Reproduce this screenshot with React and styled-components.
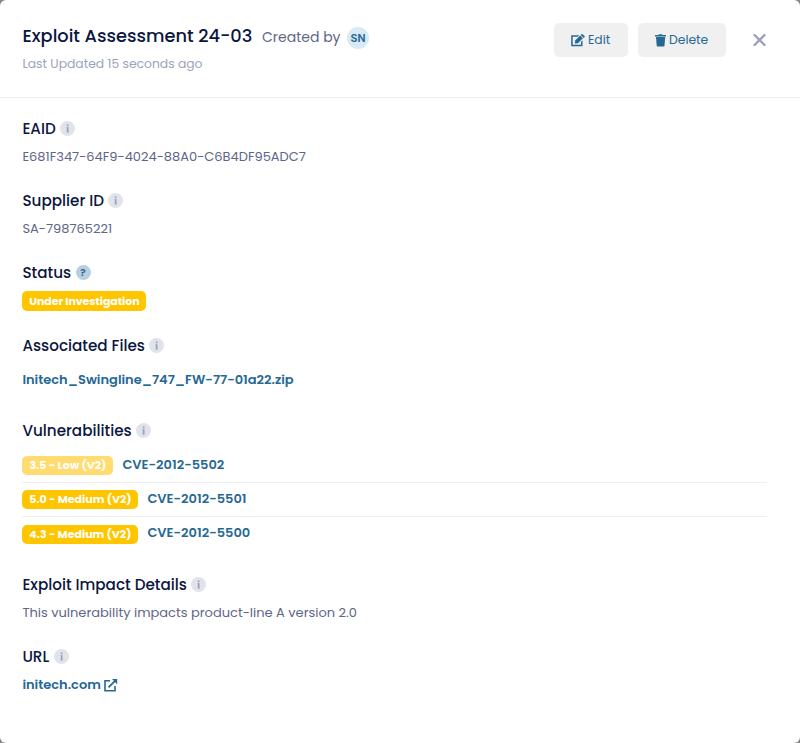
import styled, { createGlobalStyle } from "styled-components";

const GlobalStyle = createGlobalStyle`
  * {
    box-sizing: border-box;
  }
  body {
    margin: 0;
    background-color: #858585;
    font-family: Poppins, Inter, "Open Sans", sans-serif;
  }
`;

const Modal = styled.div`
  display: flex;
  flex-direction: column;
  height: 743px;
  background-color: white;
  border-radius: 6px;
  color: #5e6687;
`;

const Header = styled.div`
  display: flex;
  justify-content: space-between;
  height: 98px;
  padding: 21px 34px 0 22.4px;
  border-bottom: 1px solid #ececee;
`;

const TitleRow = styled.div`
  display: flex;
  align-items: center;
  height: 30px;
`;

const Title = styled.h1`
  width: 239.6px;
  margin: 0;
  color: #0b1640;
  font-size: 17.8px;
  font-weight: 500;
  line-height: 28px;
  white-space: nowrap;
`;

const CreatedBy = styled.span`
  width: 85px;
  margin-top: 2px;
  font-size: 14px;
`;

const Avatar = styled.div`
  width: 22px;
  height: 22px;
  margin-top: 3px;
  border-radius: 50%;
  background-color: #d8eaf6;
  color: #2a6c98;
  font-family: Inter, sans-serif;
  font-size: 10.5px;
  font-weight: 700;
  line-height: 23px;
  text-align: center;
`;

const Updated = styled.div`
  margin-top: 3px;
  color: #9ba3bc;
  font-size: 12.35px;
  line-height: 20px;
`;

const Actions = styled.div`
  display: flex;
  align-items: center;
  height: 34px;
  margin-top: 2px;
`;

const Button = styled.button`
  display: flex;
  align-items: center;
  gap: 3px;
  width: ${(props) => props.$width}px;
  height: 34px;
  margin-right: 10px;
  padding: 0 0 0 17px;
  border: none;
  border-radius: 5px;
  background-color: #f0f0f0;
  color: #256894;
  font-family: inherit;
  font-size: 12.35px;
  white-space: nowrap;
`;

const CloseButton = styled.button`
  display: flex;
  margin-left: 17px;
  padding: 0;
  border: none;
  background: none;
  color: #99a1bb;
`;

const Body = styled.div`
  display: flex;
  flex-direction: column;
  padding: 19px 33px 0 22.4px;
`;

const Section = styled.section`
  margin-bottom: ${(props) => props.$space ?? 22}px;
`;

const Heading = styled.h2`
  display: flex;
  align-items: center;
  gap: 4.4px;
  height: 22px;
  margin: 0 0 ${(props) => props.$space ?? 8}px;
  color: #0b1640;
  font-size: 15.2px;
  font-weight: 500;
`;

const HintIcon = styled.svg`
  width: 15px;
  height: 15px;
  fill: #98a0b8;
`;

const HelpHint = styled.span`
  width: 15px;
  height: 15px;
  border-radius: 50%;
  background-color: #b9cfdf;
  color: #256894;
  font-size: 10px;
  font-weight: 600;
  line-height: 16px;
  text-align: center;
`;

const Value = styled.div`
  font-size: 13px;
  line-height: 20px;
`;

const Link = styled.a`
  display: flex;
  align-items: center;
  gap: 3px;
  color: #256894;
  font-size: 13px;
  font-weight: 600;
  line-height: 20px;
`;

const Badge = styled.span`
  display: block;
  width: ${(props) => props.$width}px;
  height: 20px;
  border-radius: 5px;
  background-color: ${(props) => (props.$low ? "#ffdb70" : "#ffc600")};
  color: white;
  font-size: 11px;
  font-weight: 700;
  line-height: 20px;
  letter-spacing: ${(props) => props.$tracking ?? 0}px;
  text-align: center;
  white-space: nowrap;
`;

const VulnRow = styled.div`
  display: flex;
  align-items: center;
  gap: 9px;
  height: 34px;
  border-bottom: 1px solid #efefef;

  &:last-child {
    border-bottom: none;
  }

  ${Badge} {
    height: 19px;
    line-height: 18px;
  }
  ${Link} {
    margin-top: -2px;
  }
`;

const vulnerabilities = [
  { id: "CVE-2012-5502", score: "3.5 - Low (V2)", low: true, width: 91 },
  { id: "CVE-2012-5501", score: "5.0 - Medium (V2)", width: 116 },
  { id: "CVE-2012-5500", score: "4.3 - Medium (V2)", width: 116 },
];

const Hint = () => (
  <HintIcon viewBox="0 0 15 15">
    <circle cx="7.5" cy="7.5" r="7.5" fill="#e0e3ea" />
    <path d="M6.8 3.6h1.7v1.7H6.8zM6.3 6.2h2.2v4.6h.3v.8H6.5v-.8h.3V7.1h-.5z" />
  </HintIcon>
);

const EditIcon = () => (
  <svg width="14" height="13" viewBox="0 0 14 13" fill="currentColor">
    <path d="M.2 1.2h8L6.8 2.7H1.7v8.1H10V7.7l1.5-1.5v6.1H.2z" />
    <path d="M3.8 9.5l.4-3 5-5 2.7 2.7-5 5z" />
    <path d="M9.8.9l.6-.6q.6-.5 1.2 0l1.9 1.8q.5.6 0 1.2l-.8.7z" />
  </svg>
);

const TrashIcon = () => (
  <svg width="11" height="13" viewBox="0 0 11 13" fill="currentColor">
    <path d="M0 1h3.5L4 .2h3l.5.8H11v1.5H0zM1 3.1h9.2l-.7 8.3q-.1 1.2-1.2 1.2H2.8q-1 0-1.1-1.2z" />
  </svg>
);

const CloseIcon = () => (
  <svg width="13" height="12" viewBox="0 0 13 12" stroke="currentColor">
    <path d="M1.5 1l10 10M11.5 1l-10 10" strokeWidth="2.4" strokeLinecap="round" />
  </svg>
);

const ExternalIcon = () => (
  <svg width="14" height="13" viewBox="0 0 14 13" fill="none" stroke="currentColor">
    <path d="M6 1.8H1v10h10V7" strokeWidth="1.6" />
    <path d="M4.5 8.3L11.5 1.3" strokeWidth="1.8" />
    <path d="M8 0h5.2v5.2z" fill="currentColor" stroke="none" />
  </svg>
);

function App() {
  return (
    <>
      <GlobalStyle />
      <Modal>
        <Header>
          <div>
            <TitleRow>
              <Title>Exploit Assessment 24-03</Title>
              <CreatedBy>Created by</CreatedBy>
              <Avatar>SN</Avatar>
            </TitleRow>
            <Updated>Last Updated 15 seconds ago</Updated>
          </div>
          <Actions>
            <Button $width={74}>
              <EditIcon /> Edit
            </Button>
            <Button $width={88}>
              <TrashIcon /> Delete
            </Button>
            <CloseButton aria-label="Close">
              <CloseIcon />
            </CloseButton>
          </Actions>
        </Header>
        <Body>
          <Section>
            <Heading>
              EAID <Hint />
            </Heading>
            <Value>E681F347-64F9-4024-88A0-C6B4DF95ADC7</Value>
          </Section>
          <Section>
            <Heading>
              Supplier ID <Hint />
            </Heading>
            <Value>SA-798765221</Value>
          </Section>
          <Section $space={23}>
            <Heading>
              Status <HelpHint>?</HelpHint>
            </Heading>
            <Badge $width={124} $tracking={-0.08}>
              Under Investigation
            </Badge>
          </Section>
          <Section $space={29}>
            <Heading $space={14}>
              Associated Files <Hint />
            </Heading>
            <Link>Initech_Swingline_747_FW-77-01a22.zip</Link>
          </Section>
          <Section>
            <Heading>
              Vulnerabilities <Hint />
            </Heading>
            <div>
              {vulnerabilities.map((vuln) => (
                <VulnRow key={vuln.id}>
                  <Badge $width={vuln.width} $low={vuln.low}>
                    {vuln.score}
                  </Badge>
                  <Link>{vuln.id}</Link>
                </VulnRow>
              ))}
            </div>
          </Section>
          <Section>
            <Heading>
              Exploit Impact Details <Hint />
            </Heading>
            <Value>This vulnerability impacts product-line A version 2.0</Value>
          </Section>
          <Section>
            <Heading>
              URL <Hint />
            </Heading>
            <Link>
              initech.com <ExternalIcon />
            </Link>
          </Section>
        </Body>
      </Modal>
    </>
  );
}

export default App;
